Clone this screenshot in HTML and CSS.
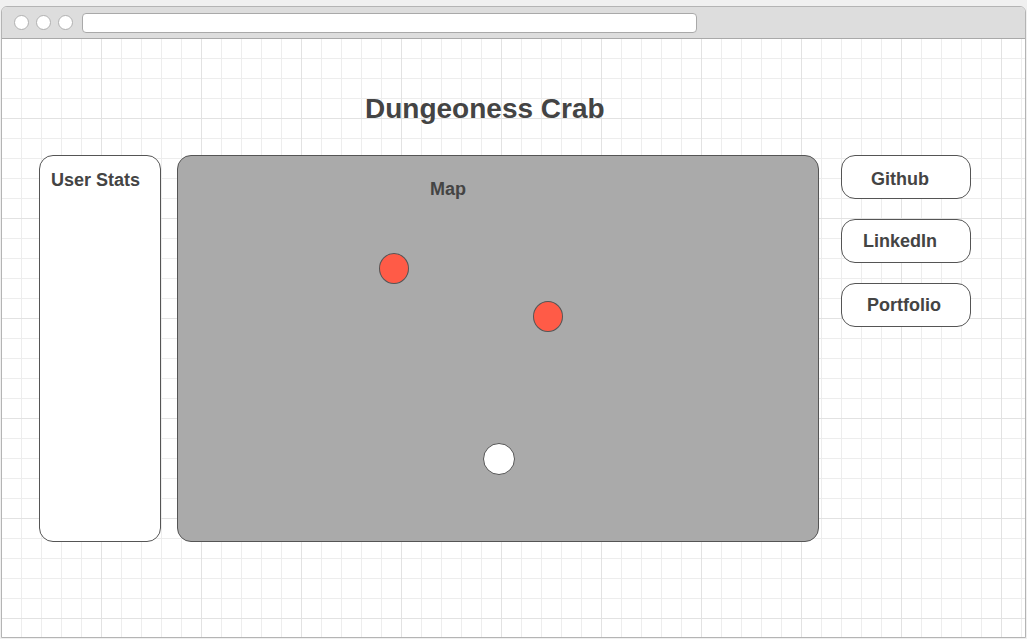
FILE: index.html
```html
<!DOCTYPE html>
<html>
<head>
<meta charset="utf-8">
<link rel="stylesheet" href="styles.css">
</head>
<body>
<div class="frame">
  <div class="chrome">
    <span class="dot"></span><span class="dot"></span><span class="dot"></span>
    <div class="address"></div>
  </div>
  <div class="canvas">
    <h1 class="title">Dungeoness Crab</h1>
    <div class="row">
      <div class="stats">User Stats</div>
      <div class="map">
        <div class="map-label">Map</div>
        <span class="pin pin-red pin-a"></span>
        <span class="pin pin-red pin-b"></span>
        <span class="pin pin-white pin-c"></span>
      </div>
      <div class="links">
        <div class="btn btn-github">Github</div>
        <div class="btn btn-linkedin">LinkedIn</div>
        <div class="btn btn-portfolio">Portfolio</div>
      </div>
    </div>
  </div>
</div>
</body>
</html>
```
FILE: styles.css
```css
html, body {
  margin: 0;
  padding: 0;
  background: #f0f0f0;
  font-family: "Liberation Sans", Arial, sans-serif;
}
body {
  padding: 6px 0 0 1px;
  width: 1027px;
  height: 639px;
  box-sizing: border-box;
  overflow: hidden;
}
.frame {
  width: 1025px;
  height: 632px;
  box-sizing: border-box;
  border: 1px solid #b4b4b4;
  border-radius: 6px 6px 0 0;
  background: #fff;
  display: flex;
  flex-direction: column;
  overflow: hidden;
}
.chrome {
  height: 32px;
  flex: none;
  box-sizing: border-box;
  background: #dddddd;
  border-bottom: 1px solid #a9a9a9;
  display: flex;
  align-items: center;
  padding-left: 12px;
  gap: 7px;
}
.dot {
  width: 15px;
  height: 15px;
  box-sizing: border-box;
  border-radius: 50%;
  background: #fff;
  border: 1px solid #b0b0b0;
}
.address {
  margin-left: 2px;
  width: 615px;
  height: 20px;
  box-sizing: border-box;
  background: #fff;
  border: 1px solid #a9a9a9;
  border-radius: 4px;
}
.canvas {
  flex: 1;
  background-color: #fff;
  background-image:
    linear-gradient(to right, #e2e2e2 1px, transparent 1px),
    linear-gradient(to bottom, #e2e2e2 1px, transparent 1px),
    linear-gradient(to right, #ededed 1px, transparent 1px),
    linear-gradient(to bottom, #ededed 1px, transparent 1px);
  background-size: 100px 100px, 100px 100px, 20px 20px, 20px 20px;
  background-position: 99px 0, 0 79px, 19px 0, 0 19px;
  padding-top: 54px;
  box-sizing: border-box;
}
.title {
  margin: 0;
  padding-left: 363px;
  font-size: 28px;
  line-height: 32px;
  font-weight: bold;
  color: #444;
}
.row {
  display: flex;
  margin-top: 30px;
  padding-left: 37px;
  height: 387px;
}
.stats {
  width: 122px;
  box-sizing: border-box;
  border: 1px solid #555;
  border-radius: 14px;
  background: #fff;
  padding: 14px 0 0 11px;
  font-size: 18px;
  font-weight: bold;
  color: #444;
  line-height: 20px;
}
.map {
  position: relative;
  margin-left: 16px;
  width: 642px;
  box-sizing: border-box;
  border: 1px solid #555;
  border-radius: 14px;
  background: #aaaaaa;
}
.map-label {
  padding: 23px 0 0 252px;
  font-size: 18px;
  font-weight: bold;
  color: #444;
  line-height: 20px;
}
.pin {
  position: absolute;
  box-sizing: border-box;
  border-radius: 50%;
  border: 1px solid #555;
}
.pin-red {
  width: 30px;
  height: 31px;
  background: #ff5b47;
}
.pin-white {
  width: 32px;
  height: 32px;
  background: #fff;
}
.pin-a { left: 201px; top: 97px; }
.pin-b { left: 355px; top: 145px; }
.pin-c { left: 305px; top: 287px; }
.links {
  margin-left: 22px;
  display: flex;
  flex-direction: column;
  gap: 20px;
}
.btn {
  width: 130px;
  height: 44px;
  box-sizing: border-box;
  border: 1px solid #555;
  border-radius: 14px;
  background: #fff;
  display: flex;
  align-items: center;
  justify-content: center;
  font-size: 18px;
  font-weight: bold;
  color: #444;
}
.btn-github { padding: 4px 12px 0 0; }
.btn-linkedin { padding: 0 12px 0 0; }
.btn-portfolio { padding: 0 4px 0 0; }
```
